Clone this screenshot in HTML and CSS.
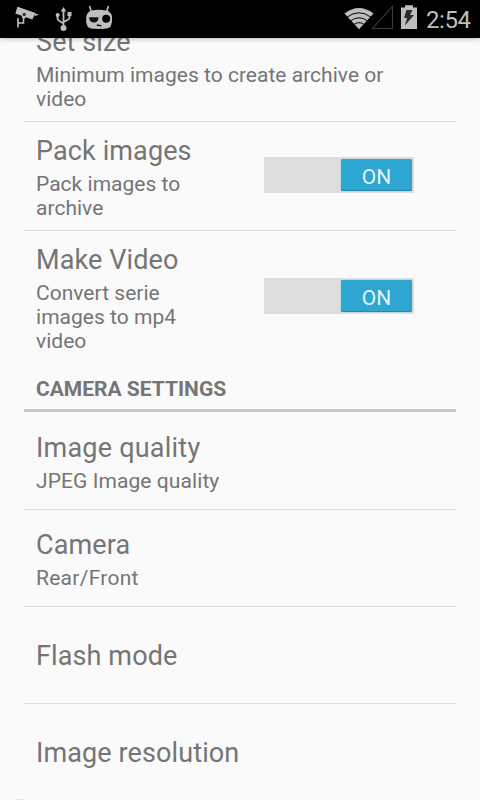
FILE: index.html
```html
<!DOCTYPE html>
<html lang="en">
<head>
<meta charset="utf-8">
<title>Settings</title>
<link rel="stylesheet" href="styles.css">
</head>
<body>
<div class="screen">
  <header class="status">
    <svg class="notifications" width="130" height="38" viewBox="0 0 130 38" fill="#bebebe">
      <path d="M17.500 6.800 35.500 13 32.300 19.500 15.300 13.600z"/>
      <path d="M34 13 38.800 14.800 35 16z"/>
      <path d="M18 18v9.500M18 23h5.500V17" fill="none" stroke="#bebebe" stroke-width="1.600"/>
      <path d="M21.500 15.500h5.500l-2 3h-2.500z"/>
      <circle cx="24.200" cy="14.500" r="1.700" fill="#333"/>
      <path d="M63.500 9v19M57.500 15v3.500q0 1.500 2 2.500l4 2.500M69.500 14v3.500q0 1.500-2 2.500l-4 2" fill="none" stroke="#bebebe" stroke-width="1.800"/>
      <path d="M63.500 7 66.200 11.500h-5.400z"/>
      <circle cx="63.500" cy="28" r="3"/><circle cx="57.700" cy="15" r="2"/><path d="M67.500 12h4v4h-4z"/>
      <path d="M89.500 6 91.500 12M108.500 6 106.500 12" stroke="#bebebe" stroke-width="1.600"/>
      <path d="M92 10.500q7-1.500 14 0Q111.500 11.500 112 17q.5 6-1.300 9.500-1.700 2.500-11.700 2.500t-11.500-2.500Q85.500 22 86.200 17 87 11.500 92 10.500z"/>
      <path d="M89 17.300h9.600q-.3 5.200-4.700 5.200T89 17.300z" fill="#111"/>
      <circle cx="106.200" cy="18.800" r="4" fill="#000"/>
      <path d="M96.800 25 101.500 25.800" stroke="#111" stroke-width="1.300"/>
    </svg>
    <svg class="signals" width="80" height="38" viewBox="340 0 80 38">
      <path d="M359 29.300 344.500 13.500Q359 2.500 373.500 13.500z" fill="#bebebe"/>
      <path d="M347 17.200Q359 8.300 371 17.200M350.500 20.900Q359 14.600 367.500 20.900M354 24.400Q359 20.900 364 24.400" fill="none" stroke="#000" stroke-width="1"/>
      <path d="M372.500 28.500H392.500V6.500z" fill="none" stroke="#3c3c3c" stroke-width="1.100"/>
      <path d="M401 7.500h4V5.300h8v2.200h4V29h-16z" fill="#bebebe"/>
      <path d="M406.500 10h6l-2.500 5h4L405 25.500l2-7.500h-3z" fill="#2c2c2c"/>
    </svg>
    <span class="clock">2:54</span>
  </header>
  <main class="list">
    <section class="row first"><div class="copy"><h2>Set size</h2><p>Minimum images to create archive or video</p></div></section>
    <section class="row"><div class="copy narrow"><h2>Pack images</h2><p>Pack images to archive</p></div><div class="switch"><span class="thumb">ON</span></div></section>
    <section class="row last"><div class="copy narrow"><h2>Make Video</h2><p>Convert serie images to mp4 video</p></div><div class="switch"><span class="thumb">ON</span></div></section>
    <h3 class="category">CAMERA SETTINGS</h3>
    <section class="row single tall"><div class="copy"><h2 class="quality">Image quality</h2><p class="jpeg">JPEG Image quality</p></div></section>
    <section class="row single"><div class="copy"><h2>Camera</h2><p class="facing">Rear/Front</p></div></section>
    <section class="row single title-only"><div class="copy"><h2>Flash mode</h2></div></section>
    <section class="row single last"><div class="copy"><h2>Image resolution</h2></div></section>
  </main>
  <div class="edge"></div>
</div>
</body>
</html>
```
FILE: styles.css
```css
* { box-sizing: border-box; }
body { margin: 0; background: #fafafa; }
.screen {
  position: relative;
  width: 480px;
  height: 800px;
  overflow: hidden;
  background: #fafafa;
  color: #757575;
  font-family: Roboto, sans-serif;
}
.status {
  position: relative;
  z-index: 1;
  display: flex;
  height: 38px;
  background: #000;
  box-shadow: 0 1px 5px rgba(0, 0, 0, .25);
}
.signals { margin-left: 210px; }
.clock {
  margin-left: 6px;
  color: #bebebe;
  font-size: 24px;
  letter-spacing: -.4px;
  line-height: 40px;
}
.list { padding: 0 24px; }
.row {
  display: flex;
  align-items: center;
  padding: 11px 12px 10px;
  border-bottom: 1px solid #dedede;
}
.first { margin-top: -14px; padding-top: 0; }
.last { border-bottom: 0; }
.copy { width: 385px; }
.narrow { width: 180px; }
h2, h3, p { margin: 0; }
h2 { font-size: 27px; font-weight: 400; letter-spacing: .11px; line-height: 36px; white-space: nowrap; }
p { margin-top: 3px; font-size: 21px; letter-spacing: .02px; line-height: 24px; }
.quality { letter-spacing: .22px; }
.jpeg { letter-spacing: .08px; }
.facing { letter-spacing: .27px; }
.switch {
  display: flex;
  justify-content: flex-end;
  width: 150px;
  height: 36px;
  margin: 0 0 4px 48px;
  padding: 2px;
  background: #ddd;
}
.thumb {
  width: 71px;
  height: 32px;
  border-radius: 2px;
  background: #2da6d1;
  box-shadow: inset 0 -1px #2589ad, 0 0 1px #4c8799;
  color: #e4f3f8;
  font-size: 21px;
  line-height: 36px;
  text-align: center;
}
.category {
  height: 49px;
  padding: 13px 12px 0;
  border-bottom: 3px solid #c8c8c8;
  font-size: 21px;
  font-weight: 700;
  line-height: 26px;
}
.single { height: 97px; padding: 0 12px; }
.tall { height: 98px; padding-top: 2px; }
.title-only { padding-top: 2px; }
.edge { position: absolute; left: 15px; bottom: 0; width: 9px; height: 1px; background: #e5e5e5; }
```
